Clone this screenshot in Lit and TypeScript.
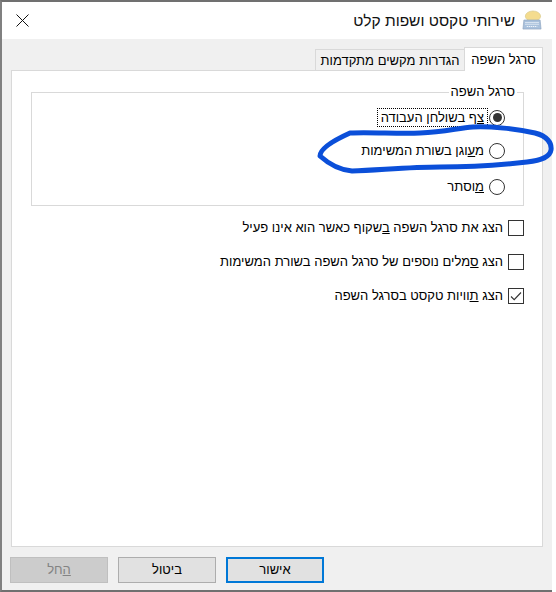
import { LitElement, html, css } from "lit";
import { customElement } from "lit/decorators.js";

@customElement("app-root")
export class AppRoot extends LitElement {
  static styles = css`
    :host { display: block; width: 556px; height: 592px; background: #fff; position: relative; overflow: hidden;
      font-family: "Liberation Sans", "Noto Sans", sans-serif; font-size: 13px; color: #000; }
    * { box-sizing: border-box; }
    .win { width: 552px; height: 592px; display: flex; flex-direction: column; background: #f0f0f0;
      border-top: 2px solid #707070; border-left: 2px solid #808080; border-bottom: 2px solid #707070; direction: rtl; }
    .title { height: 37px; flex: none; background: #fff; display: flex; align-items: center; padding: 0 10px 0 14px; gap: 7px; }
    .title .txt { font-size: 15.5px; flex: 1; color: #111; white-space: nowrap; }
    .body { flex: 1; display: flex; flex-direction: column; padding: 8px 9px 0 9px; min-height: 0; }
    .tabs { display: flex; align-items: flex-end; height: 24px; flex: none; position: relative; z-index: 1; margin-bottom: -1px; }
    .tab { height: 22px; border: 1px solid #d9d9d9; border-right: none; display: flex; align-items: center; width: 149px; justify-content: center; background: #f0f0f0; white-space: nowrap; }
    .tab.on { height: 24px; width: 79px; background: #fff; border: 1px solid #d9d9d9; border-bottom: none; }
    .page { height: 477px; flex: none; background: #fff; border: 1px solid #d9d9d9; padding: 13px 18px 0 19px; display: flex; flex-direction: column; }
    fieldset { margin: 0; padding: 0; border: 1px solid #d9d9d9; height: 122px; display: flex; flex-direction: column; min-inline-size: 0; }
    legend { padding: 0 2px; margin-right: 6px; line-height: 16px; }
    .radios { display: flex; flex-direction: column; padding: 1px 18px 0 0; }
    .row { display: flex; align-items: center; gap: 4px; white-space: nowrap; }
    .r1, .r2 { height: 33px; }
    .r3 { height: 36px; padding-top: 3px; }
    .lbl { line-height: 16px; padding: 0 1px; }
    .focus { outline: 1px dotted #000; line-height: 17px; padding: 0 3px; margin-right: -2px; }
    .radio { width: 16px; height: 16px; border-radius: 50%; border: 1px solid #333; background: #fff; display: flex; align-items: center; justify-content: center; flex: none; }
    .radio i { width: 9px; height: 9px; border-radius: 50%; background: #333; display: block; }
    .checks { display: flex; flex-direction: column; padding: 5px 0 0 0; }
    .check { height: 34px; }
    .box { width: 16px; height: 16px; border: 1px solid #333; background: #fff; flex: none; display: flex; }
    .foot { flex: 1; display: flex; gap: 10px; align-items: flex-start; padding: 10px 219px 0 0; }
    button { all: unset; box-sizing: border-box; flex: none; width: 98px; height: 26px; background: #e1e1e1; border: 1px solid #adadad; font: inherit; text-align: center; line-height: 24px; }
    button.def { border: 2px solid #0078d7; line-height: 22px; }
    button.off { background: #cccccc; border-color: #bfbfbf; color: #838383; }
    .ink { position: absolute; left: 0; top: 0; pointer-events: none; }
    .close { flex: none; }
  `;

  render() {
    return html`
      <div class="win">
        <div class="title">
          <svg width="20" height="21" viewBox="0 0 21 21">
            <ellipse cx="11.5" cy="6" rx="8" ry="5.5" fill="#f4dc8e" stroke="#d8c98a" stroke-width=".7"/>
            <path d="M8 10l-1 3 4-2z" fill="#f4dc8e"/>
            <path d="M2 10h17l1 9.5H1z" fill="#a9c1dc" stroke="#8ea5bf" stroke-width=".7"/>
            <path d="M3.5 12.5h14M3.5 14.5h14M5 16.8h11" stroke="#eef4fa" stroke-width="1.1" stroke-dasharray="1.4 .7"/>
          </svg>
          <span class="txt">שירותי טקסט ושפות קלט</span>
          <svg class="close" width="13" height="13" viewBox="0 0 13 13">
            <path d="M.5.5l12 12M12.5.5l-12 12" stroke="#111" stroke-width="1" fill="none"/>
          </svg>
        </div>
        <div class="body">
          <div class="tabs">
            <div class="tab on">סרגל השפה</div>
            <div class="tab">הגדרות מקשים מתקדמות</div>
          </div>
          <div class="page">
            <fieldset>
              <legend>סרגל השפה</legend>
              <div class="radios">
                <div class="row r1"><span class="radio"><i></i></span><span class="lbl focus"><u>צ</u>ף בשולחן העבודה</span></div>
                <div class="row r2"><span class="radio"></span><span class="lbl">מ<u>ע</u>וגן בשורת המשימות</span></div>
                <div class="row r3"><span class="radio"></span><span class="lbl"><u>מ</u>וסתר</span></div>
              </div>
            </fieldset>
            <div class="checks">
              <div class="row check"><span class="box"></span><span class="lbl">הצג את סרגל השפה <u>ב</u>שקוף כאשר הוא אינו פעיל</span></div>
              <div class="row check"><span class="box"></span><span class="lbl">הצג <u>ס</u>מלים נוספים של סרגל השפה בשורת המשימות</span></div>
              <div class="row check"><span class="box"><svg width="14" height="14" viewBox="0 0 14 14"><path d="M2 7.5l3.2 3.2L12 3.5" fill="none" stroke="#333" stroke-width="1.1"/></svg></span><span class="lbl">הצג <u>ת</u>וויות טקסט בסרגל השפה</span></div>
            </div>
          </div>
          <div class="foot">
            <button class="def">אישור</button>
            <button>ביטול</button>
            <button class="off"><u>ה</u>חל</button>
          </div>
        </div>
      </div>
      <svg class="ink" width="556" height="592" viewBox="0 0 556 592">
        <path d="M350 133C370 132 400 134 420 133C445 132 458 128 473 127C490 126 517 129 535 133C547 136 552 143 551 150C550 157 542 160 527 162C500 165 470 167 440 167C410 167 380 170 352 171C340 170 330 165 320 156C320 150 330 142 350 133Z"
          fill="none" stroke="#0b4fd9" stroke-width="5" stroke-linejoin="round"/>
      </svg>
    `;
  }
}
